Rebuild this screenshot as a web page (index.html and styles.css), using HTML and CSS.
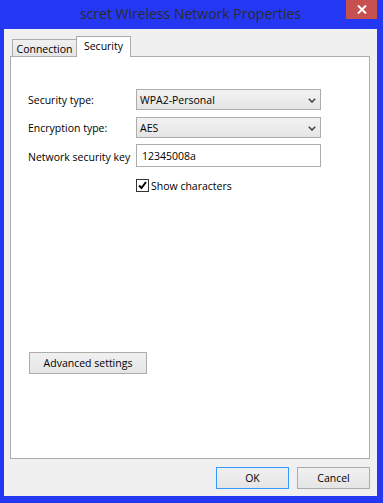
FILE: index.html
```html
<!DOCTYPE html>
<html>
<head>
<meta charset="utf-8">
<link rel="stylesheet" href="styles.css">
</head>
<body>
<div class="window">
  <div class="titlebar">
    <span class="title">scret Wireless Network Properties</span>
    <div class="close">
      <svg width="10" height="9" viewBox="0 0 10 9"><path d="M1 0.5 L9 8.5 M9 0.5 L1 8.5" stroke="#fff" stroke-width="2"/></svg>
    </div>
  </div>
  <div class="client">
    <div class="tabs">
      <div class="tab">Connection</div>
      <div class="tab active">Security</div>
    </div>
    <div class="panel">
      <div class="form">
        <div class="label">Security type:</div>
        <div class="select"><span>WPA2-Personal</span><svg class="chev" width="8" height="5" viewBox="0 0 8 5"><path d="M0.8 0.8 L4 4 L7.2 0.8" fill="none" stroke="#444" stroke-width="1.6"/></svg></div>
        <div class="label">Encryption type:</div>
        <div class="select"><span>AES</span><svg class="chev" width="8" height="5" viewBox="0 0 8 5"><path d="M0.8 0.8 L4 4 L7.2 0.8" fill="none" stroke="#444" stroke-width="1.6"/></svg></div>
        <div class="label">Network security key</div>
        <div class="input">12345008a</div>
        <div></div>
        <div class="check"><span class="box"><svg width="11" height="11" viewBox="0 0 11 11"><path d="M2 5.5 L4.5 8 L9 2" fill="none" stroke="#000" stroke-width="2"/></svg></span><span>Show characters</span></div>
      </div>
      <div class="btn adv">Advanced settings</div>
    </div>
    <div class="actions">
      <div class="btn default">OK</div>
      <div class="btn">Cancel</div>
    </div>
  </div>
</div>
</body>
</html>
```
FILE: styles.css
```css
* { box-sizing: border-box; }
html, body { margin: 0; padding: 0; }
body {
  width: 383px;
  height: 503px;
  background: #2438f4;
  font-family: "Open Sans", "Noto Sans", sans-serif;
  font-size: 10.5px;
  color: #000;
  overflow: hidden;
}
.window {
  display: flex;
  flex-direction: column;
  height: 503px;
}
.titlebar {
  height: 29px;
  display: grid;
  grid-template-columns: 1fr auto 1fr;
  align-items: start;
}
.title {
  grid-column: 2;
  font-size: 14px;
  line-height: 27px;
  color: #2b2b2b;
  padding-right: 2px;
}
.close {
  grid-column: 3;
  justify-self: end;
  margin-right: 6px;
  width: 31px;
  height: 19px;
  background: #c75050;
  display: flex;
  align-items: center;
  justify-content: center;
}
.close svg { display: block; }
.client {
  margin: 0 6px 0 4px;
  height: 467px;
  background: #f0f0f0;
  padding: 7px 7px 7px 6px;
  display: flex;
  flex-direction: column;
}
.tabs {
  height: 20px;
  display: flex;
  align-items: flex-end;
  padding-left: 2px;
}
.tab {
  height: 17px;
  width: 65px;
  border: 1px solid #acacac;
  border-bottom: none;
  background: linear-gradient(#f0f0f0, #e6e6e6);
  display: flex;
  align-items: center;
  justify-content: center;
  line-height: 14px;
  padding-top: 1px;
}
.tab.active {
  height: 21px;
  width: 55px;
  margin-left: -1px;
  margin-bottom: -1px;
  background: #fff;
  position: relative;
  z-index: 1;
  padding-top: 0;
  padding-bottom: 2px;
}
.panel {
  height: 403px;
  background: #fff;
  border: 1px solid #acacac;
  padding: 32px 0 0 16px;
}
.form {
  display: grid;
  grid-template-columns: 109px 185px;
  grid-template-rows: 21px 21px 22px 18px;
  row-gap: 7px;
}
.label {
  display: flex;
  align-items: center;
  padding-left: 1px;
  padding-top: 1px;
}
.select {
  border: 1px solid #acacac;
  background: linear-gradient(#f2f2f2, #e5e5e5);
  display: flex;
  align-items: center;
  justify-content: space-between;
  padding: 0 4px 0 3px;
}
.chev { display: block; margin-top: 2px; }
.input {
  border: 1px solid #acacac;
  background: #fff;
  display: flex;
  align-items: center;
  padding-left: 5px;
  margin-top: -1px;
  height: 23px;
}
.check {
  align-self: end;
  display: flex;
  align-items: center;
  gap: 2px;
  height: 13px;
}
.box {
  width: 13px;
  height: 13px;
  border: 1px solid #333;
  background: #fff;
  display: flex;
  align-items: center;
  justify-content: center;
}
.box svg { display: block; }
.btn {
  height: 22px;
  border: 1px solid #acacac;
  background: linear-gradient(#f0f0f0, #e5e5e5);
  display: flex;
  align-items: center;
  justify-content: center;
}
.adv {
  width: 118px;
  margin: 160px 0 0 2px;
}
.actions {
  margin-top: 8px;
  display: flex;
  justify-content: flex-end;
  gap: 8px;
}
.actions .btn { width: 73px; }
.btn.default { border-color: #3399ff; }
```
